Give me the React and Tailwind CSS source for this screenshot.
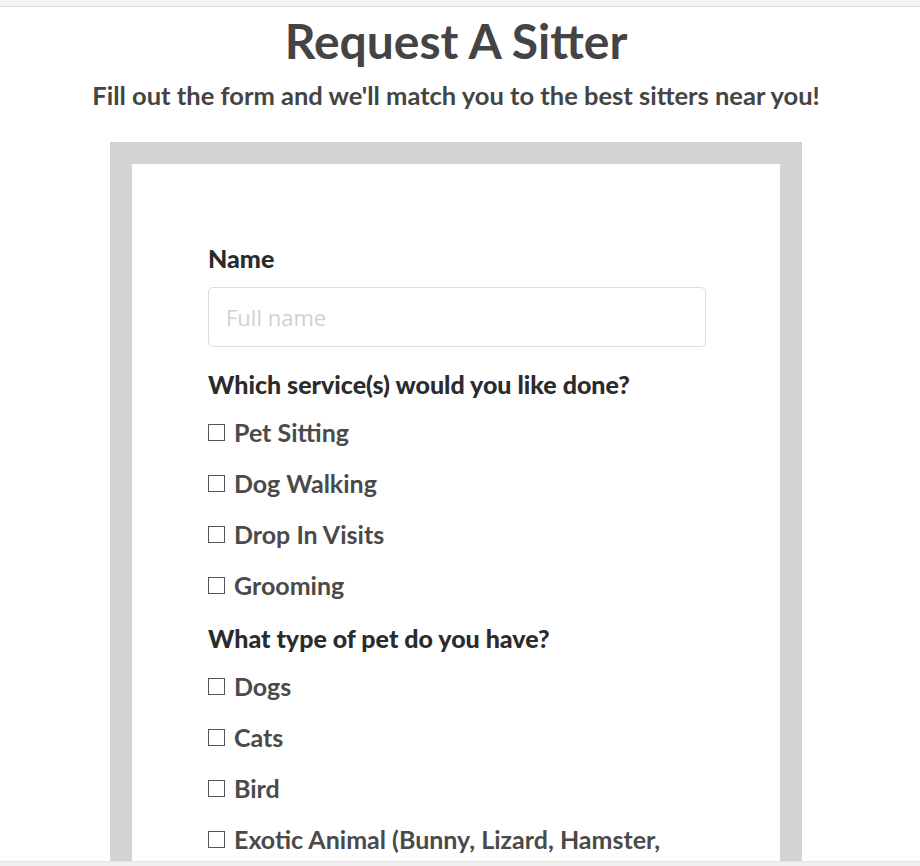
const services = ['Pet Sitting', 'Dog Walking', 'Drop In Visits', 'Grooming']
const pets = ['Dogs', 'Cats', 'Bird', 'Exotic Animal (Bunny, Lizard, Hamster,']

function Check({ label }) {
  return (
    <label className="flex h-[51px] items-center gap-[9px] text-[25px] font-bold leading-none text-[#4a4a4a]">
      <span className="block h-[17px] w-[17px] shrink-0 border-[1.5px] border-[#555] bg-white" />
      <span className="whitespace-nowrap">{label}</span>
    </label>
  )
}

export default function App() {
  return (
    <div className="flex h-[866px] flex-col overflow-hidden bg-white font-['Lato',sans-serif]">
      <div className="h-[7px] shrink-0 border-b border-[#dedede] bg-[#f4f4f4]" />
      <main className="w-[912px] flex-1 overflow-hidden">
        <h1 className="mt-[6px] text-center text-[48px] font-bold leading-[56px] text-[#444]">
          Request A Sitter
        </h1>
        <p className="mt-[11px] text-center text-[25.5px] font-bold leading-[30px] text-[#444]">
          Fill out the form and we'll match you to the best sitters near you!
        </p>
        <div className="mx-auto mt-[32px] w-[692px] bg-[#d3d3d3] px-[22px] pt-[22px]">
          <form className="bg-white px-[76px] pt-[80px] pb-10">
            <div className="text-[25px] font-black leading-[28px] text-[#2b2b2b]">Name</div>
            <input
              type="text"
              placeholder="Full name"
              className="mt-[15px] h-[60px] w-[498px] rounded-[5px] border border-[#dcdcdc] px-[17px] font-['Open_Sans',sans-serif] text-[22px] text-[#333] placeholder:text-[#d0d0d0] focus:outline-none"
            />
            <div className="mt-[23px] text-[25px] font-black leading-[28px] text-[#2b2b2b]">
              Which service(s) would you like done?
            </div>
            <div className="mt-[9px]">
              {services.map((s) => (
                <Check key={s} label={s} />
              ))}
            </div>
            <div className="mt-[13px] text-[25px] font-black leading-[28px] text-[#2b2b2b]">
              What type of pet do you have?
            </div>
            <div className="mt-[9px]">
              {pets.map((s) => (
                <Check key={s} label={s} />
              ))}
            </div>
          </form>
        </div>
      </main>
      <div className="h-[5px] shrink-0 border-t border-[#e2e2e2] bg-[#f0f0f0]" />
    </div>
  )
}
